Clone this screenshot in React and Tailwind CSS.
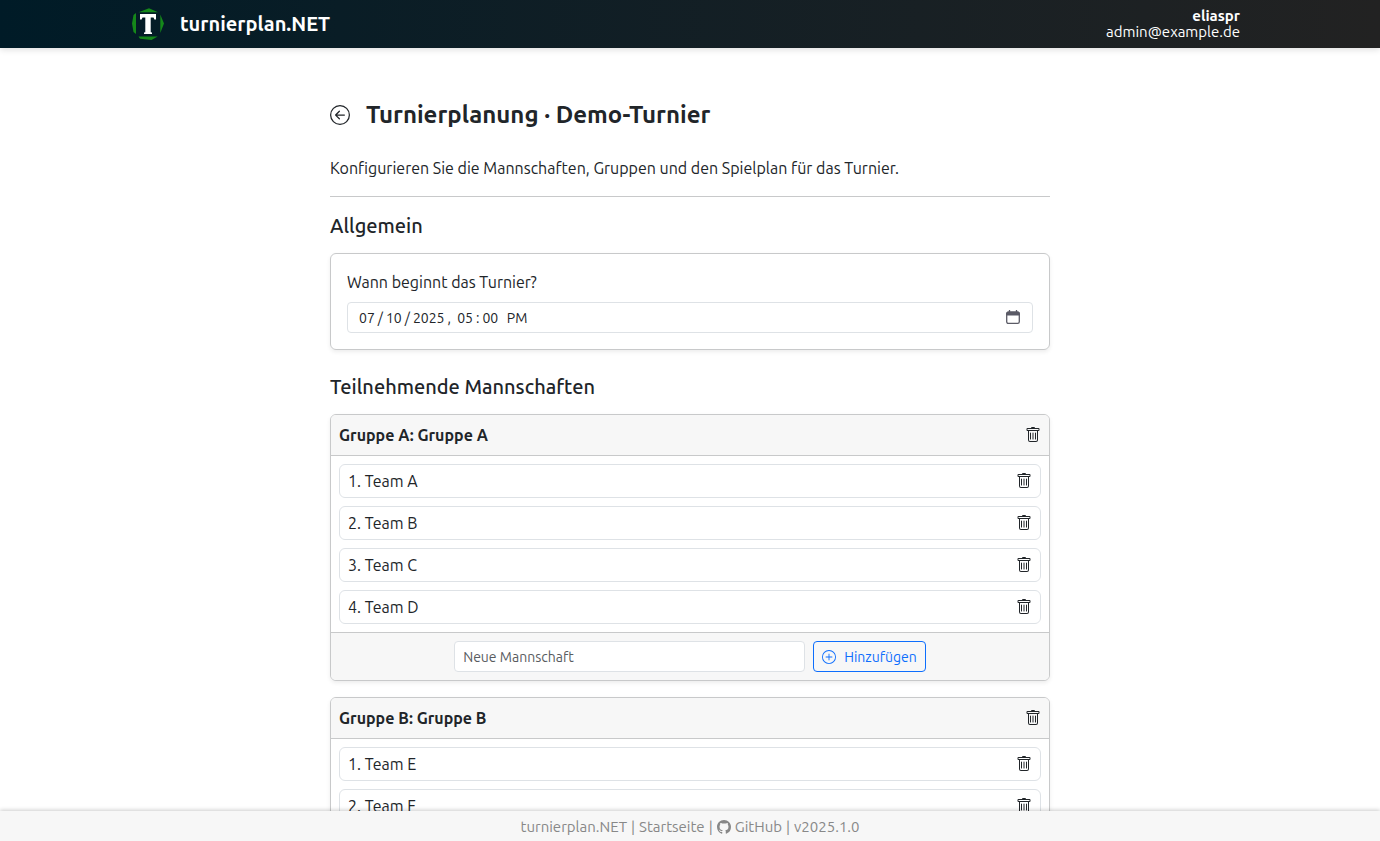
import { useState } from "react";
import { BsArrowLeftCircle, BsTrash, BsPlusCircle, BsGithub } from "react-icons/bs";

const initialGroups = [
  { id: "A", name: "Gruppe A", teams: ["Team A", "Team B", "Team C", "Team D"] },
  { id: "B", name: "Gruppe B", teams: ["Team E", "Team F", "Team G", "Team H"] },
];

function Logo() {
  return (
    <svg className="size-8" viewBox="0 0 32 32" aria-hidden="true">
      <path fill="#15881a" d="M6.500 4.200 17 .3l9 3.900zM28.300 6.500 32 15.500 28.300 25zM25.700 28.500 19.500 32 8 30.700 6.500 28.500zM4 5v21L1.500 24 0 15.500 1.500 7z" />
      <path fill="#fff" d="M8 6h16v5.500h-1.600L21.500 9.600H18.700v14.600l1.300.3V26h-8v-1.500l1.300-.3V9.600h-2.800L9.600 11.500H8z" />
    </svg>
  );
}

function CalendarIcon() {
  return (
    <svg className="pointer-events-none absolute top-2 right-3 size-4" viewBox="0 0 16 16" fill="none" stroke="#5b5b66" aria-hidden="true">
      <path d="M4.500 0v3M11.500 0v3" strokeWidth="1.300" />
      <path d="M1.600 5V3.500q0-1.500 1.500-1.500h9.800q1.500 0 1.500 1.500V5z" fill="#5b5b66" strokeWidth="1" />
      <rect x="1.700" y="2.200" width="12.600" height="11.200" rx="1.600" strokeWidth="1.300" />
    </svg>
  );
}

function Header() {
  return (
    <header className="relative z-10 bg-linear-to-r from-[#001b27] to-[#222222] text-white shadow-[0_2px_6px_rgba(0,0,0,0.12)]">
      <div className="mx-auto flex h-12 max-w-[1140px] items-center justify-between pr-5 pl-3">
        <a href="#" className="flex items-center gap-4 text-xl leading-[30px] font-bold">
          <Logo />
          turnierplan.NET
        </a>
        <div className="text-right text-[15px] leading-4">
          <div className="font-bold">eliaspr</div>
          <div>admin@example.de</div>
        </div>
      </div>
    </header>
  );
}

function DeleteButton({ label }) {
  return (
    <button type="button" aria-label={label}>
      <BsTrash className="size-4" />
    </button>
  );
}

function Group({ group }) {
  return (
    <section className="mb-4 overflow-hidden rounded-md border border-[#c8c9ca] bg-white shadow-[0_2px_4px_rgba(0,0,0,0.075)]">
      <div className="flex h-10 items-center justify-between bg-[#f7f7f7] px-2">
        <h3 className="font-bold">Gruppe {group.id}: {group.name}</h3>
        <DeleteButton label={`${group.name} löschen`} />
      </div>
      <ol className="flex flex-col gap-2 border-y border-[#c8c9ca] p-2">
        {group.teams.map((team, i) => (
          <li key={team} className="flex items-center justify-between rounded-md border border-[#dee2e6] px-2 py-1">
            <span>{i + 1}. {team}</span>
            <DeleteButton label={`${team} löschen`} />
          </li>
        ))}
      </ol>
      <form className="flex justify-center gap-2 bg-[#f7f7f7] p-2" onSubmit={(e) => e.preventDefault()}>
        <input
          type="text"
          aria-label="Neue Mannschaft"
          placeholder="Neue Mannschaft"
          className="w-[351px] rounded-sm border border-[#dee2e6] bg-white px-2 pt-[5px] pb-1 text-sm leading-5 placeholder:text-[#595c5f]"
        />
        <button type="submit" className="flex items-center gap-2 rounded-sm border border-[#0d6efd] px-2 pt-[5px] pb-1 text-sm leading-5 text-[#0d6efd]">
          <BsPlusCircle className="size-3.5" />
          Hinzufügen
        </button>
      </form>
    </section>
  );
}

export default function App() {
  const [start, setStart] = useState("2025-07-10T17:00");
  return (
    <div className="flex h-screen flex-col bg-white font-[Ubuntu,'Noto_Sans',sans-serif] text-[#212529]">
      <Header />
      <main className="min-h-0 flex-1 overflow-y-auto [scrollbar-width:none]">
        <div className="mx-auto max-w-[720px] pt-12">
          <div className="flex items-center gap-4">
            <a href="#" aria-label="Zurück">
              <BsArrowLeftCircle className="size-5" />
            </a>
            <h1 className="text-2xl leading-[38px] font-bold">Turnierplanung · Demo-Turnier</h1>
          </div>
          <p className="mt-[22px] border-b border-[#c8c9ca] pb-4">
            Konfigurieren Sie die Mannschaften, Gruppen und den Spielplan für das Turnier.
          </p>
          <h2 className="mt-4 mb-3.5 text-xl leading-[26px] font-medium">Allgemein</h2>
          <div className="rounded-md border border-[#c8c9ca] p-4 shadow-[0_2px_4px_rgba(0,0,0,0.075)]">
            <label htmlFor="start" className="mb-2 block">Wann beginnt das Turnier?</label>
            <div className="relative">
              <input
                id="start"
                type="datetime-local"
                value={start}
                onChange={(e) => setStart(e.target.value)}
                className="h-[31px] w-full rounded-sm border border-[#dee2e6] px-2 text-sm [&::-webkit-calendar-picker-indicator]:opacity-0 [&::-webkit-datetime-edit-month-field]:px-[3px] [&::-webkit-datetime-edit-day-field]:px-[3px] [&::-webkit-datetime-edit-year-field]:px-[3px] [&::-webkit-datetime-edit-hour-field]:px-[3px] [&::-webkit-datetime-edit-minute-field]:px-[3px] [&::-webkit-datetime-edit-ampm-field]:px-1"
              />
              <CalendarIcon />
            </div>
          </div>
          <h2 className="mt-6 mb-3.5 text-xl leading-[26px] font-medium">Teilnehmende Mannschaften</h2>
          {initialGroups.map((g) => (
            <Group key={g.id} group={g} />
          ))}
        </div>
      </main>
      <footer className="relative z-10 flex items-center justify-center gap-1 bg-[#f7f7f7] pt-[5px] pb-[3px] text-[15px] leading-[22px] text-[#888888] shadow-[0_-1px_4px_rgba(0,0,0,0.2)]">
        <a href="#">turnierplan.NET</a>
        <span>|</span>
        <a href="#">Startseite</a>
        <span>|</span>
        <a href="#" className="flex items-center gap-1">
          <BsGithub className="size-3.5" />
          GitHub
        </a>
        <span>|</span>
        <span>v2025.1.0</span>
      </footer>
    </div>
  );
}
